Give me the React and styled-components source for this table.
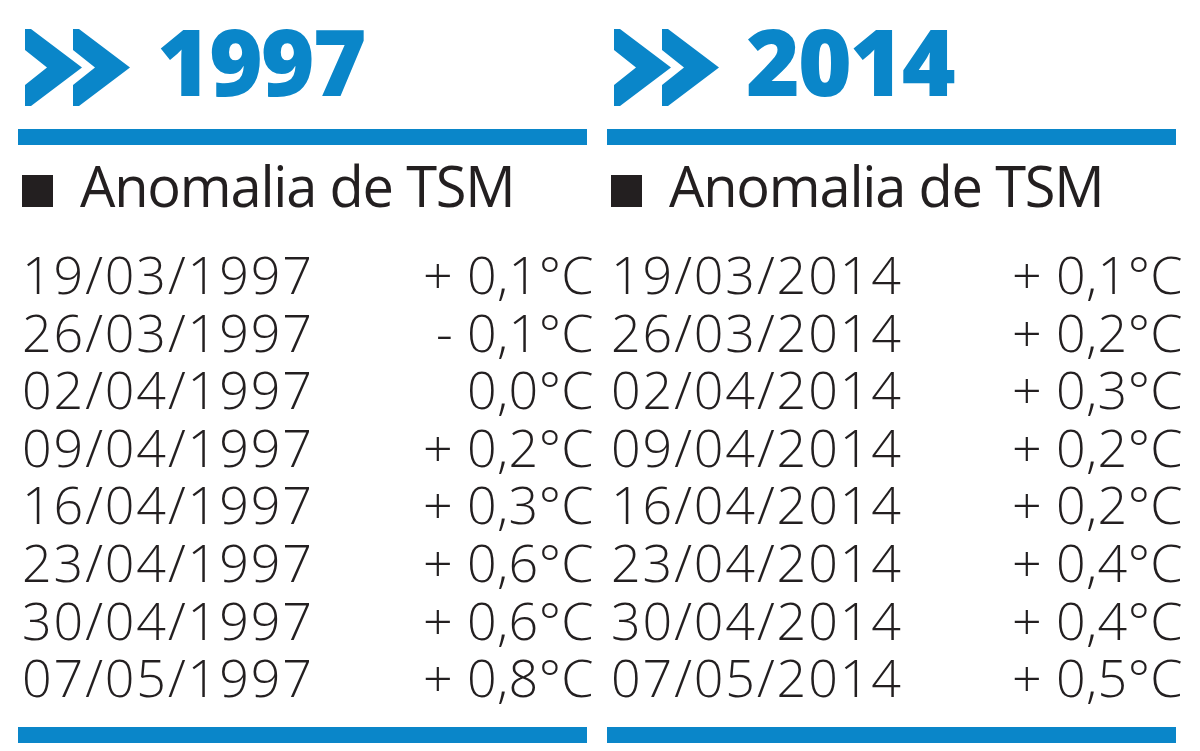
import styled, { createGlobalStyle } from 'styled-components';

const blue = '#0a86c9';
const ink = '#231f20';

const GlobalStyle = createGlobalStyle`
  html, body {
    margin: 0;
    padding: 0;
    background: #ffffff;
  }
  body {
    font-family: 'Open Sans', 'Liberation Sans', sans-serif;
    color: ${ink};
  }
`;

const data = [
  {
    year: '1997',
    rows: [
      ['19/03/1997', '+ 0,1°C'],
      ['26/03/1997', '- 0,1°C'],
      ['02/04/1997', '0,0°C'],
      ['09/04/1997', '+ 0,2°C'],
      ['16/04/1997', '+ 0,3°C'],
      ['23/04/1997', '+ 0,6°C'],
      ['30/04/1997', '+ 0,6°C'],
      ['07/05/1997', '+ 0,8°C'],
    ],
  },
  {
    year: '2014',
    rows: [
      ['19/03/2014', '+ 0,1°C'],
      ['26/03/2014', '+ 0,2°C'],
      ['02/04/2014', '+ 0,3°C'],
      ['09/04/2014', '+ 0,2°C'],
      ['16/04/2014', '+ 0,2°C'],
      ['23/04/2014', '+ 0,4°C'],
      ['30/04/2014', '+ 0,4°C'],
      ['07/05/2014', '+ 0,5°C'],
    ],
  },
];

const Page = styled.div`
  width: 1200px;
  height: 751px;
  box-sizing: border-box;
  padding-left: 18px;
  display: grid;
  grid-template-columns: 569px 569px;
  column-gap: 20px;
  overflow: hidden;
`;

const Column = styled.section`
  display: flex;
  flex-direction: column;
`;

const Header = styled.div`
  height: 129px;
  box-sizing: border-box;
  padding: 29px 0 0 7px;
  display: flex;
  align-items: flex-start;
  gap: 27px;
`;

const Year = styled.h1`
  margin: -28px 0 0;
  font-size: 92px;
  line-height: 1.3;
  font-weight: 800;
  letter-spacing: -2px;
  color: ${blue};
`;

const Rule = styled.div`
  height: 16px;
  background: ${blue};
`;

const Subtitle = styled.h2`
  margin: 12px 0 0 4px;
  display: flex;
  align-items: flex-end;
  gap: 27px;
  font-size: 56px;
  line-height: 56px;
  font-weight: 500;
  letter-spacing: -1.2px;
  color: ${ink};
`;

const Bullet = styled.span`
  width: 31px;
  height: 32px;
  margin-bottom: 6px;
  background: ${ink};
  flex: none;
`;

const Table = styled.div`
  margin: 32px -7px 21px 0;
  display: flex;
  flex-direction: column;
`;

const Row = styled.div`
  display: flex;
  justify-content: space-between;
  font-size: 52px;
  line-height: 57.6px;
  font-weight: 340;
  color: ${ink};
`;

const DateCell = styled.span`
  padding-left: 4px;
  letter-spacing: 1.9px;
`;

const ValueCell = styled.span`
  white-space: pre;
  letter-spacing: 0.4px;
`;

const Chevrons = () => (
  <svg width="105" height="77" viewBox="0 0 105 77">
    <polygon
      fill={blue}
      points="0,0 6,0 57,38.5 6,77 0,77 0,56 22,38.5 0,21"
    />
    <polygon
      fill={blue}
      points="48,0 54,0 105,38.5 54,77 48,77 48,56 70,38.5 48,21"
    />
  </svg>
);

const YearColumn = ({ year, rows }) => (
  <Column>
    <Header>
      <Chevrons />
      <Year>{year}</Year>
    </Header>
    <Rule />
    <Subtitle>
      <Bullet />
      Anomalia de TSM
    </Subtitle>
    <Table>
      {rows.map(([date, value]) => (
        <Row key={date}>
          <DateCell>{date}</DateCell>
          <ValueCell>{value}</ValueCell>
        </Row>
      ))}
    </Table>
    <Rule />
  </Column>
);

const App = () => (
  <>
    <GlobalStyle />
    <Page>
      {data.map((col) => (
        <YearColumn key={col.year} year={col.year} rows={col.rows} />
      ))}
    </Page>
  </>
);

export default App;
